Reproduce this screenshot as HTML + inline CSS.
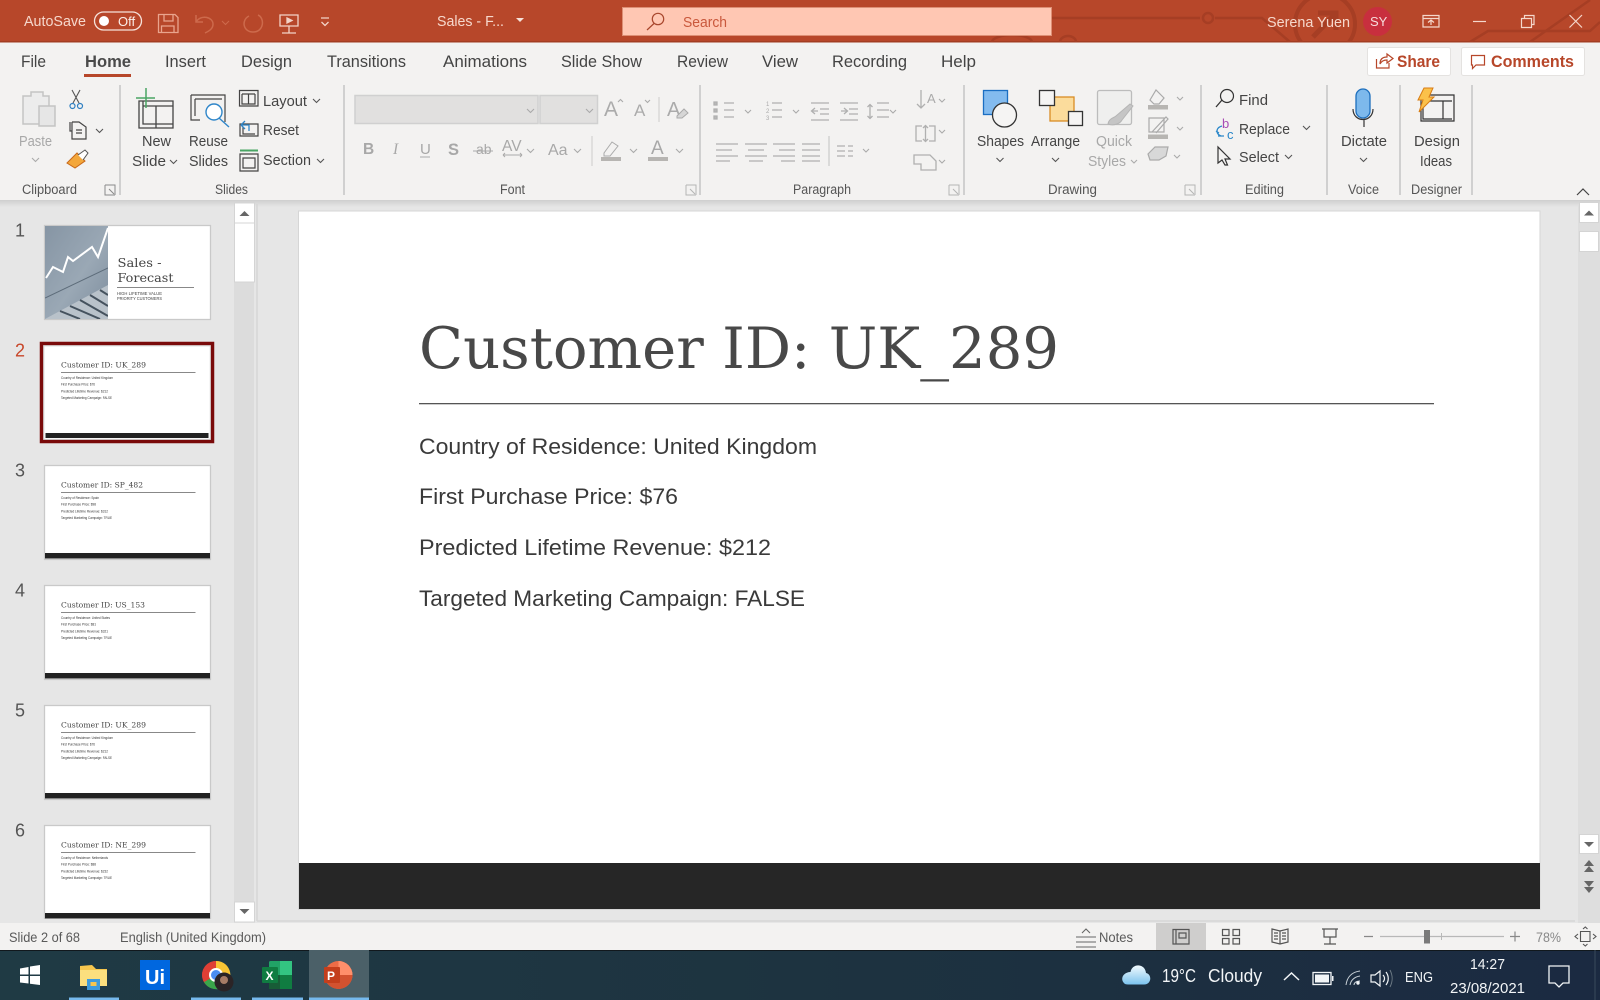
<!DOCTYPE html>
<html lang="en"><head><meta charset="utf-8"><title>Sales - Forecast - PowerPoint</title>
<style>
html,body{margin:0;padding:0;width:1600px;height:1000px;overflow:hidden;background:#e6e6e6}
svg{display:block;position:absolute;left:0;top:0;filter:blur(.35px)}
text{font-family:"Liberation Sans",sans-serif;font-size:15px;fill:#444}
.t{fill:#f6d8cc}
.tab{font-size:16.5px;fill:#444}
.lb{font-size:13.5px;fill:#555}
.b{font-size:15px;fill:#444}
.d{font-size:15px;fill:#a8a8a8}
.ch{fill:none;stroke:#555;stroke-width:1.1}
.cg{fill:none;stroke:#aaa;stroke-width:1.1}
.ser{font-family:"DejaVu Serif",serif;fill:#444}
.sm{font-size:3.4px;fill:#333}
.sn{font-size:18px;fill:#555}
.s{font-size:13.5px;fill:#5a5a5a}
.w{fill:#f2f5f7}
</style></head><body>
<svg width="1600" height="1000" viewBox="0 0 1600 1000" xmlns="http://www.w3.org/2000/svg">
<defs>
<linearGradient id="tb" x1="0" x2="1" y1="0" y2="0"><stop offset="0" stop-color="#1f3a44"/><stop offset=".5" stop-color="#1d3340"/><stop offset="1" stop-color="#1b2a41"/></linearGradient>
<linearGradient id="sh" x1="0" x2="0" y1="0" y2="1"><stop offset="0" stop-color="#cfcfcf"/><stop offset="1" stop-color="#e6e6e6"/></linearGradient>
<linearGradient id="ph" x1="0" x2="1" y1="0" y2="1"><stop offset="0" stop-color="#8695a4"/><stop offset=".55" stop-color="#9aa8b5"/><stop offset="1" stop-color="#7d8d9d"/></linearGradient>
<linearGradient id="cl" x1="0" x2="0" y1="0" y2="1"><stop offset="0" stop-color="#f2fafe"/><stop offset="1" stop-color="#7cc3ee"/></linearGradient>
<clipPath id="th"><rect x="0" y="204" width="232" height="715"/></clipPath>
<clipPath id="pc"><rect x="45" y="226" width="63" height="93"/></clipPath>
</defs>

<!-- title bar -->
<rect width="1600" height="42" fill="#b7472a"/>
<rect y="41" width="1600" height="1.5" fill="#a33d22"/>
<g fill="none" stroke="#a63e24" stroke-width="2.5">
<path d="M1052 18H1200M1215 18H1262L1290 42"/><circle cx="1208" cy="18" r="5"/>
<circle cx="1325" cy="24" r="30" stroke-width="4"/><path d="M1313 37L1336 13M1318 13H1336V30" stroke-width="5"/>
<path d="M1470 42L1488 31H1590L1600 22M1530 42L1590 0"/>
<path d="M1060 42a8 6 0 0 1 16 0M992 42a20 7 0 0 1 40 0"/>
</g>
<text class="t" x="24" y="26" textLength="62" lengthAdjust="spacingAndGlyphs">AutoSave</text>
<rect x="94.5" y="12" width="47" height="18" rx="9" fill="none" stroke="#f6e2da" stroke-width="1.3"/>
<circle cx="104" cy="21" r="5" fill="#fff"/>
<text x="118" y="26" style="font-size:13px;fill:#fbeee9">Off</text>
<g fill="none" stroke="#e9a48d" stroke-width="1.3">
<path d="M158.5 14.5H175L178 17.500V32.500H158.500ZM164 14.500V21H173V14.500M161.500 32.500V26H174V32.500"/>
</g>
<g fill="none" stroke="#cd6a4c" stroke-width="1.5">
<path d="M196 15V22H203M196 22C201 14 213 17 213 24C213 29 209 31 205 33"/>
<path d="M222 21l3.500 3.500 3.500-3.500" stroke-width="1"/>
<path d="M258 15C265 18 264 32 253 32C243 32 241 20 249 16"/>
</g>
<g fill="none" stroke="#f3d3c7" stroke-width="1.3">
<path d="M280 15H298V26H280ZM289 26V33M282 33H296"/><path d="M287 18L292 20.500L287 23Z" fill="#f3d3c7"/>
<path d="M321 18H329M321.500 22L325 25.500L328.500 22"/>
</g>
<text class="t" x="437" y="26" textLength="67" lengthAdjust="spacingAndGlyphs">Sales - F...</text>
<path d="M516 18H524L520 22Z" fill="#f6e2da"/>
<rect x="622.500" y="7.500" width="429" height="28" fill="#ffc7b3" stroke="#dd8f75"/>
<circle cx="658" cy="19" r="5.700" fill="none" stroke="#a8462c" stroke-width="1.200"/><path d="M654 23.500L647 30" stroke="#a8462c" stroke-width="1.200"/>
<text x="683" y="27" textLength="44" lengthAdjust="spacingAndGlyphs" style="fill:#c9583c">Search</text>
<text class="t" x="1267" y="27" textLength="83" lengthAdjust="spacingAndGlyphs">Serena Yuen</text>
<circle cx="1377.500" cy="21.500" r="14.500" fill="#c82f3e"/>
<text x="1370" y="26" style="font-size:13px;fill:#f6dcdc">SY</text>
<g fill="none" stroke="#f5d8cc" stroke-width="1.200">
<path d="M1423 15.500H1439V27H1423ZM1423 18.500H1439M1431 25V20M1428 22.500L1431 20L1434 22.500"/>
<path d="M1473 21.500H1486"/>
<path d="M1521.500 18.500H1531.500V27.500H1521.500ZM1524.500 18.500V15.500H1534V24.500H1531.500"/>
<path d="M1569.500 15L1582 27.500M1582 15L1569.500 27.500"/>
</g>

<!-- ribbon -->
<rect y="42.500" width="1600" height="157.500" fill="#f3f2f1"/>
<rect y="200" width="1600" height="7" fill="url(#sh)"/>
<text class="tab" x="21" y="67" textLength="25" lengthAdjust="spacingAndGlyphs">File</text>
<text class="tab" x="85" y="67" textLength="46" lengthAdjust="spacingAndGlyphs" style="font-weight:700;fill:#4a4a4a">Home</text>
<rect x="84" y="74" width="47" height="3" fill="#b7472a"/>
<text class="tab" x="165" y="67" textLength="41" lengthAdjust="spacingAndGlyphs">Insert</text>
<text class="tab" x="241" y="67" textLength="51" lengthAdjust="spacingAndGlyphs">Design</text>
<text class="tab" x="327" y="67" textLength="79" lengthAdjust="spacingAndGlyphs">Transitions</text>
<text class="tab" x="443" y="67" textLength="84" lengthAdjust="spacingAndGlyphs">Animations</text>
<text class="tab" x="561" y="67" textLength="81" lengthAdjust="spacingAndGlyphs">Slide Show</text>
<text class="tab" x="677" y="67" textLength="51" lengthAdjust="spacingAndGlyphs">Review</text>
<text class="tab" x="762" y="67" textLength="36" lengthAdjust="spacingAndGlyphs">View</text>
<text class="tab" x="832" y="67" textLength="75" lengthAdjust="spacingAndGlyphs">Recording</text>
<text class="tab" x="941" y="67" textLength="35" lengthAdjust="spacingAndGlyphs">Help</text>

<rect x="1367.500" y="47.500" width="83" height="28" rx="2" fill="#fff" stroke="#e4e2e0"/>
<rect x="1461.500" y="47.500" width="123" height="28" rx="2" fill="#fff" stroke="#e4e2e0"/>
<path d="M1376.500 59V68H1389V63M1380 64C1380 59 1383 57 1387 57V54L1393 58.500L1387 63V60C1384 60 1381.500 61 1380 64Z" fill="none" stroke="#b7472a" stroke-width="1.200"/>
<text x="1397" y="67" textLength="43" lengthAdjust="spacingAndGlyphs" style="font-size:17px;font-weight:700;fill:#b7472a">Share</text>
<path d="M1471.500 55.500H1484.500V65H1476L1472.500 68.500V65H1471.500Z" fill="none" stroke="#b7472a" stroke-width="1.200"/>
<text x="1491" y="67" textLength="83" lengthAdjust="spacingAndGlyphs" style="font-size:17px;font-weight:700;fill:#b7472a">Comments</text>

<g stroke="#bebebe" stroke-width="1.300">
<path d="M120 85V195M344 85V195M700 85V195M964 85V195M1201 85V195M1327 85V195M1400 85V195M1472 85V195"/>
</g>
<text class="lb" x="22" y="194" textLength="55" lengthAdjust="spacingAndGlyphs">Clipboard</text>
<text class="lb" x="215" y="194" textLength="33" lengthAdjust="spacingAndGlyphs">Slides</text>
<text class="lb" x="500" y="194" textLength="25" lengthAdjust="spacingAndGlyphs">Font</text>
<text class="lb" x="793" y="194" textLength="58" lengthAdjust="spacingAndGlyphs">Paragraph</text>
<text class="lb" x="1048" y="194" textLength="49" lengthAdjust="spacingAndGlyphs">Drawing</text>
<text class="lb" x="1245" y="194" textLength="39" lengthAdjust="spacingAndGlyphs">Editing</text>
<text class="lb" x="1348" y="194" textLength="31" lengthAdjust="spacingAndGlyphs">Voice</text>
<text class="lb" x="1411" y="194" textLength="51" lengthAdjust="spacingAndGlyphs">Designer</text>
<g fill="none" stroke="#8a8a8a" stroke-width="1">
<path d="M105 185H115V195M105 185V195H115M109 189L114 194"/>
</g>
<g fill="none" stroke="#b5b5b5" stroke-width="1">
<path d="M686 185H696V195M686 185V195H696M690 189L695 194M949 185H959V195M949 185V195H959M953 189L958 194M1185 185H1195V195M1185 185V195H1195M1189 189L1194 194"/>
</g>
<path d="M1577 195L1583 189L1589 195" fill="none" stroke="#444" stroke-width="1.200"/>

<!-- clipboard -->
<g fill="#ececec" stroke="#c4c4c4" stroke-width="1.500">
<path d="M23 96H31V92H43V96H49V124H23Z"/><rect x="39" y="106" width="16" height="20" fill="#e6e6e6"/>
</g>
<text class="d" x="19" y="146" textLength="33" lengthAdjust="spacingAndGlyphs">Paste</text>
<path class="cg" d="M32 158l3.500 3.500 3.500-3.500"/>
<g fill="none" stroke="#555" stroke-width="1.100"><path d="M72 90L79 103M80 90L73 103"/></g>
<circle cx="72.500" cy="106" r="2.500" fill="none" stroke="#2f7fc1" stroke-width="1.200"/><circle cx="80" cy="106" r="2.500" fill="none" stroke="#2f7fc1" stroke-width="1.200"/>
<path d="M70 122V131H72M72 122H79L86 127V139H72V122M76 130H82M76 133H82" fill="none" stroke="#444" stroke-width="1.200"/>
<path class="ch" d="M96 129l3.500 3.500 3.500-3.500"/>
<path d="M67 163L77 153L85 161L75 168Z" fill="#f3a73b" stroke="#c8691a"/>
<path d="M78 155L85 150L88 153L83 160" fill="#fff" stroke="#555"/>

<!-- slides -->
<g fill="none" stroke="#444" stroke-width="1.300"><path d="M139 101H173V128H139ZM143 106H173M156 106V128M143 101V124H173"/></g>
<path d="M146 88V108M136 98H155" stroke="#4aa564" stroke-width="1.500"/>
<text class="b" x="142" y="146" textLength="29" lengthAdjust="spacingAndGlyphs">New</text>
<text class="b" x="132" y="166" textLength="34" lengthAdjust="spacingAndGlyphs">Slide</text>
<path class="ch" d="M170 160l3.500 3.500 3.500-3.500"/>
<g fill="none" stroke="#444" stroke-width="1.200"><path d="M191 95H225V122M191 95V120H200M195 99H222M195 99V116"/></g>
<circle cx="214" cy="112" r="8" fill="#fff" stroke="#2f86c9" stroke-width="1.400"/><path d="M219 118L229 127" stroke="#2f86c9" stroke-width="1.400"/>
<text class="b" x="189" y="146" textLength="39" lengthAdjust="spacingAndGlyphs">Reuse</text>
<text class="b" x="189" y="166" textLength="39" lengthAdjust="spacingAndGlyphs">Slides</text>
<g fill="none" stroke="#444" stroke-width="1.200">
<path d="M239.500 90.500H258V106H239.500ZM242 94H255M248.500 94V104M242 94V104H255V94"/>
<path d="M240 124H258V136H240ZM243 127V134H255"/>
<path d="M240 154H258V171H240ZM243 158H255V168H243Z" /><path d="M240 150.500H258" stroke="#4aa564" stroke-width="2"/>
</g>
<path d="M241 125L245 121M241 125L245 129M241 125H249V131" fill="none" stroke="#2f86c9" stroke-width="1.300"/>
<text class="b" x="263" y="106" textLength="44" lengthAdjust="spacingAndGlyphs">Layout</text>
<text class="b" x="263" y="135" textLength="36" lengthAdjust="spacingAndGlyphs">Reset</text>
<text class="b" x="263" y="165" textLength="48" lengthAdjust="spacingAndGlyphs">Section</text>
<path class="ch" d="M313 99l3.500 3.500 3.500-3.500M317 159l3.500 3.500 3.500-3.500"/>

<!-- font -->
<rect x="355" y="95.500" width="183" height="28" fill="#e1e0df" stroke="#d0d0d0" stroke-width="1.500"/>
<rect x="540" y="95.500" width="57.500" height="28" fill="#e1e0df" stroke="#d0d0d0" stroke-width="1.500"/>
<path class="cg" d="M527 109l3.500 3.500 3.500-3.500M586 109l3.500 3.500 3.500-3.500"/>
<text x="604" y="116" style="font-size:21px;fill:#ababab">A</text>
<path class="cg" d="M618 102l2.500-2.500 2.500 2.500M645 100l2.500 2.500 2.500-2.500"/>
<text x="634" y="116" style="font-size:17px;fill:#ababab">A</text>
<path d="M659 97V122" stroke="#ccc"/>
<text x="667" y="116" style="font-size:20px;fill:#ababab">A</text>
<path d="M677 116L684 109L688 113L682 118H677Z" fill="#d6d6d6" stroke="#aaa"/>
<text x="363" y="154" style="font-size:15.500px;font-weight:700;fill:#a8a8a8">B</text>
<text x="393" y="154" style="font-size:15.500px;font-style:italic;fill:#a8a8a8;font-family:'Liberation Serif',serif">I</text>
<text x="420" y="154" style="font-size:15px;fill:#a8a8a8">U</text><path d="M420 157H430" stroke="#aaa"/>
<text x="448" y="155" style="font-size:16.500px;font-weight:700;fill:#a8a8a8">S</text>
<text x="476" y="154" style="font-size:14px;fill:#a8a8a8">ab</text><path d="M473 151H493" stroke="#aaa"/>
<text x="502" y="151" style="font-size:15.500px;fill:#a8a8a8">AV</text><path d="M503 155H522M503 155l2-2M503 155l2 2M522 155l-2-2M522 155l-2 2" stroke="#aaa" fill="none"/>
<path class="cg" d="M527 149l3.500 3.500 3.500-3.500M574 149l3.500 3.500 3.500-3.500M630 149l3.500 3.500 3.500-3.500M676 149l3.500 3.500 3.500-3.500"/>
<text x="548" y="155" style="font-size:16px;fill:#a8a8a8">Aa</text>
<path d="M592 136V166" stroke="#ccc"/>
<path d="M604 153L612 142L618 146L610 156H604Z" fill="none" stroke="#aaa"/><rect x="601" y="157" width="20" height="4" fill="#b7b5b2"/>
<text x="651" y="154" style="font-size:19px;fill:#a8a8a8">A</text><rect x="648" y="157" width="20" height="4" fill="#b7b5b2"/>

<!-- paragraph -->
<g stroke="#b0b0b0" stroke-width="1.300" fill="none">
<path d="M724 103H734M724 110H734M724 117H734M772 103H782M772 110H782M772 117H782"/>
<path d="M714 102h3v3h-3zM714 109h3v3h-3zM714 116h3v3h-3z" fill="#b8b8b8"/>
<path d="M811 103H829M820 109H829M820 114H829M811 120H829M840 103H858M849 109H858M849 114H858M840 120H858"/>
<path d="M818 111H812M815 108L811.500 111L815 114M841 111H847M844 108L847.500 111L844 114"/>
<path d="M877 103H889M877 110H889M877 117H889M870 105V118M867.500 107L870 104.500L872.500 107M867.500 116L870 118.500L872.500 116"/>
<path d="M716 144H738M716 150H732M716 156H738M716 161H730M745 144H767M748 150H764M745 156H767M749 161H763M773 144H795M779 150H795M773 156H795M781 161H795M802 144H820M802 150H820M802 156H820M802 161H820"/>
<path d="M837 146H845M848 146H853M837 151H845M848 151H853M837 156H845M848 156H853"/>
<path d="M829 136V166" stroke="#ccc"/>
<path d="M921 90V108M917 104L921 108L925 104"/>
<path d="M922 126H916V141H922M929 126H935V141H929M925.500 125V142M923 128L925.500 125.500L928 128M923 139L925.500 141.500L928 139" />
<path d="M914 155H930L936 161V170H921V164H914Z"/>
</g>
<text x="766" y="106" style="font-size:6px;fill:#aaa">1</text>
<text x="766" y="113" style="font-size:6px;fill:#aaa">2</text>
<text x="766" y="120" style="font-size:6px;fill:#aaa">3</text>
<text x="927" y="103" style="font-size:13px;fill:#aaa">A</text>
<path class="cg" d="M745 110l3 3 3-3M793 110l3 3 3-3M890 110l3 3 3-3M939 99l3 3 3-3M939 130l3 3 3-3M939 160l3 3 3-3M863 149l3 3 3-3"/>

<!-- drawing -->
<rect x="983.500" y="90.500" width="24" height="24" fill="#83bbef" stroke="#1b6ec2" stroke-width="1.300"/>
<circle cx="1004.500" cy="115" r="12" fill="#f5f4f3" stroke="#333" stroke-width="1.300"/>
<text class="b" x="977" y="146" textLength="47" lengthAdjust="spacingAndGlyphs">Shapes</text>
<path class="ch" d="M996.500 158l3.500 3.500 3.500-3.500"/>
<rect x="1050" y="97" width="24" height="24" fill="#fbdc9c" stroke="#d98c25" stroke-width="1.300"/>
<rect x="1039.500" y="90.500" width="15" height="15" fill="#f5f4f3" stroke="#333" stroke-width="1.300"/>
<rect x="1068.500" y="111.500" width="14" height="14" fill="#f5f4f3" stroke="#333" stroke-width="1.300"/>
<text class="b" x="1031" y="146" textLength="49" lengthAdjust="spacingAndGlyphs">Arrange</text>
<path class="ch" d="M1052 158l3.500 3.500 3.500-3.500"/>
<rect x="1097.500" y="90.500" width="34" height="34" rx="2" fill="#efefee" stroke="#bcbcbc" stroke-width="1.300"/>
<path d="M1108 124C1109 118 1114 118 1116 116L1130 104L1133 106L1122 120C1120 124 1113 126 1108 124Z" fill="#c5c5c5" stroke="#b5b5b5"/>
<text class="d" x="1096" y="146" textLength="36" lengthAdjust="spacingAndGlyphs">Quick</text>
<text class="d" x="1088" y="166" textLength="38" lengthAdjust="spacingAndGlyphs">Styles</text>
<path class="cg" d="M1131 160l3 3 3-3M1177 97l3 3 3-3M1177 127l3 3 3-3M1174 155l3 3 3-3"/>
<g fill="none" stroke="#aaa" stroke-width="1.200">
<path d="M1150 100L1156 90L1164 98L1159 104H1154Z"/>
<path d="M1149 118H1164V132H1149ZM1152 132L1166 117L1168 119L1156 133"/>
<path d="M1148 154L1155 147H1168L1166 156L1159 160H1150Z" fill="#d8d8d8"/>
</g>
<rect x="1148" y="105" width="20" height="4.500" fill="#b7b5b2"/>
<rect x="1148" y="134.500" width="20" height="4.500" fill="#b7b5b2"/>

<!-- editing -->
<circle cx="1227" cy="96" r="6.500" fill="none" stroke="#333" stroke-width="1.200"/><path d="M1222 100L1216 107" stroke="#333" stroke-width="1.300"/>
<text class="b" x="1239" y="105" textLength="29" lengthAdjust="spacingAndGlyphs">Find</text>
<text x="1222" y="128" style="font-size:13px;fill:#a84cb5">b</text>
<text x="1227" y="139" style="font-size:13px;fill:#2a87c9">c</text>
<path d="M1222 126C1215 128 1216 134 1221 136M1216 131l3 2M1218 136H1224" fill="none" stroke="#2a87c9" stroke-width="1.300"/>
<text class="b" x="1239" y="134" textLength="51" lengthAdjust="spacingAndGlyphs">Replace</text>
<path class="ch" d="M1303 126l3.500 3.500 3.500-3.500"/>
<path d="M1218 147V163L1222 160L1225 165H1227.500L1225 159H1230Z" fill="#f3f2f1" stroke="#333" stroke-width="1.200"/>
<text class="b" x="1239" y="162" textLength="40" lengthAdjust="spacingAndGlyphs">Select</text>
<path class="ch" d="M1285 155l3.500 3.500 3.500-3.500"/>

<!-- voice / designer -->
<rect x="1356" y="89" width="14" height="29" rx="7" fill="#7db9ec" stroke="#1d6fbd" stroke-width="1.300"/>
<path d="M1353 109C1353 123 1373 123 1373 109M1364 120V127" fill="none" stroke="#333" stroke-width="1.200"/>
<text class="b" x="1341" y="146" textLength="46" lengthAdjust="spacingAndGlyphs">Dictate</text>
<path class="ch" d="M1360 158l3.500 3.500 3.500-3.500"/>
<g fill="none" stroke="#333" stroke-width="1.200"><path d="M1421 95H1454V121H1421ZM1423 101H1452M1443 101V119M1423 101V119H1452"/></g>
<path d="M1424 88H1433L1429 97H1434L1419 112L1423 100H1418Z" fill="#fbc14a" stroke="#d87c13"/>
<text class="b" x="1414" y="146" textLength="46" lengthAdjust="spacingAndGlyphs">Design</text>
<text class="b" x="1420" y="166" textLength="32" lengthAdjust="spacingAndGlyphs">Ideas</text>

<!-- thumbnail panel -->
<rect x="234" y="204" width="20" height="718" fill="#dcdcdc"/>
<rect x="234.500" y="203" width="20" height="20" fill="#fff" stroke="#d4d4d4"/>
<path d="M239.500 216L244.500 211L249.500 216Z" fill="#666"/>
<rect x="234.500" y="223" width="20" height="59" fill="#fff" stroke="#d4d4d4"/>
<rect x="234.500" y="902" width="20" height="20" fill="#fff" stroke="#d4d4d4"/>
<path d="M239.500 909L244.500 914L249.500 909Z" fill="#666"/>
<path d="M257 204V921M257 921H1575" stroke="#d6d6d6" stroke-width="1.500" fill="none"/>

<g clip-path="url(#th)">
<!-- thumb1 -->
<rect x="44.500" y="225.500" width="166" height="94" fill="#fff" stroke="#c9c9c9" stroke-width="1.300"/>
<g clip-path="url(#pc)">
<rect x="45" y="226" width="63" height="93" fill="url(#ph)"/>
<path d="M45 298L108 268" stroke="#5d6c7a" stroke-width="1"/>
<path d="M45 319L108 285V319Z" fill="#b9c2ca"/>
<path d="M60 311L80 319M70 306L100 319M80 300L108 316M90 295L108 306M100 290L108 295" stroke="#45525e" stroke-width="2"/>
</g>
<path d="M46 278L53 267L63 272L68 257L73 261L92 247L98 257L108 228" fill="none" stroke="#fff" stroke-width="2"/>
<text class="ser" x="117.500" y="267" textLength="44" lengthAdjust="spacingAndGlyphs" style="font-size:12.500px">Sales -</text>
<text class="ser" x="117.500" y="282" textLength="56" lengthAdjust="spacingAndGlyphs" style="font-size:12.500px">Forecast</text>
<path d="M117 287.500H194" stroke="#888"/>
<text x="117" y="295" textLength="45" lengthAdjust="spacingAndGlyphs" style="font-size:4.500px;fill:#444">HIGH LIFETIME VALUE</text>
<text x="117" y="300" textLength="45" lengthAdjust="spacingAndGlyphs" style="font-size:4.500px;fill:#444">PRIORITY CUSTOMERS</text>
<!-- thumb2 -->
<rect x="41.500" y="343.500" width="171" height="98" fill="#fff" stroke="#7a0a0a" stroke-width="3.500"/>
<rect x="43.800" y="345.800" width="166.500" height="93.500" fill="none" stroke="#cfcfcf" stroke-width="1"/>
<rect x="45.500" y="433" width="163" height="5" fill="#222"/>
<text class="ser" x="61" y="367.500" textLength="85" lengthAdjust="spacingAndGlyphs" style="font-size:7.800px">Customer ID: UK_289</text>
<path d="M61 372.500H195.500" stroke="#888"/>
<text class="sm" x="61" y="379" textLength="52" lengthAdjust="spacingAndGlyphs">Country of Residence: United Kingdom</text>
<text class="sm" x="61" y="385.500" textLength="34" lengthAdjust="spacingAndGlyphs">First Purchase Price: $76</text>
<text class="sm" x="61" y="392.500" textLength="47" lengthAdjust="spacingAndGlyphs">Predicted Lifetime Revenue: $212</text>
<text class="sm" x="61" y="399" textLength="51" lengthAdjust="spacingAndGlyphs">Targeted Marketing Campaign: FALSE</text>
<!-- thumb3 -->
<rect x="44.500" y="465.500" width="166" height="94" fill="#fff" stroke="#c9c9c9" stroke-width="1.300"/>
<rect x="45" y="553" width="165" height="5.500" fill="#222"/>
<text class="ser" x="61" y="487.500" textLength="82" lengthAdjust="spacingAndGlyphs" style="font-size:7.800px">Customer ID: SP_482</text>
<path d="M61 492.500H195.500" stroke="#888"/>
<text class="sm" x="61" y="499" textLength="38" lengthAdjust="spacingAndGlyphs">Country of Residence: Spain</text>
<text class="sm" x="61" y="505.500" textLength="35" lengthAdjust="spacingAndGlyphs">First Purchase Price: $98</text>
<text class="sm" x="61" y="512.500" textLength="47" lengthAdjust="spacingAndGlyphs">Predicted Lifetime Revenue: $312</text>
<text class="sm" x="61" y="519" textLength="51" lengthAdjust="spacingAndGlyphs">Targeted Marketing Campaign: TRUE</text>
<!-- thumb4 -->
<rect x="44.500" y="585.500" width="166" height="94" fill="#fff" stroke="#c9c9c9" stroke-width="1.300"/>
<rect x="45" y="673" width="165" height="5.500" fill="#222"/>
<text class="ser" x="61" y="607.500" textLength="84" lengthAdjust="spacingAndGlyphs" style="font-size:7.800px">Customer ID: US_153</text>
<path d="M61 612.500H195.500" stroke="#888"/>
<text class="sm" x="61" y="619" textLength="49" lengthAdjust="spacingAndGlyphs">Country of Residence: United States</text>
<text class="sm" x="61" y="625.500" textLength="35" lengthAdjust="spacingAndGlyphs">First Purchase Price: $81</text>
<text class="sm" x="61" y="632.500" textLength="47" lengthAdjust="spacingAndGlyphs">Predicted Lifetime Revenue: $321</text>
<text class="sm" x="61" y="639" textLength="51" lengthAdjust="spacingAndGlyphs">Targeted Marketing Campaign: TRUE</text>
<!-- thumb5 -->
<rect x="44.500" y="705.500" width="166" height="94" fill="#fff" stroke="#c9c9c9" stroke-width="1.300"/>
<rect x="45" y="793" width="165" height="5.500" fill="#222"/>
<text class="ser" x="61" y="727.500" textLength="85" lengthAdjust="spacingAndGlyphs" style="font-size:7.800px">Customer ID: UK_289</text>
<path d="M61 732.500H195.500" stroke="#888"/>
<text class="sm" x="61" y="739" textLength="52" lengthAdjust="spacingAndGlyphs">Country of Residence: United Kingdom</text>
<text class="sm" x="61" y="745.500" textLength="34" lengthAdjust="spacingAndGlyphs">First Purchase Price: $76</text>
<text class="sm" x="61" y="752.500" textLength="47" lengthAdjust="spacingAndGlyphs">Predicted Lifetime Revenue: $212</text>
<text class="sm" x="61" y="759" textLength="51" lengthAdjust="spacingAndGlyphs">Targeted Marketing Campaign: FALSE</text>
<!-- thumb6 -->
<rect x="44.500" y="825.500" width="166" height="94" fill="#fff" stroke="#c9c9c9" stroke-width="1.300"/>
<rect x="45" y="913" width="165" height="5.500" fill="#222"/>
<text class="ser" x="61" y="847.500" textLength="85" lengthAdjust="spacingAndGlyphs" style="font-size:7.800px">Customer ID: NE_299</text>
<path d="M61 852.500H195.500" stroke="#888"/>
<text class="sm" x="61" y="859" textLength="47" lengthAdjust="spacingAndGlyphs">Country of Residence: Netherlands</text>
<text class="sm" x="61" y="865.500" textLength="35" lengthAdjust="spacingAndGlyphs">First Purchase Price: $88</text>
<text class="sm" x="61" y="872.500" textLength="47" lengthAdjust="spacingAndGlyphs">Predicted Lifetime Revenue: $232</text>
<text class="sm" x="61" y="879" textLength="51" lengthAdjust="spacingAndGlyphs">Targeted Marketing Campaign: TRUE</text>
</g>
<text class="sn" x="15" y="236.500">1</text>
<text class="sn" x="15" y="356.500" style="fill:#c8472a">2</text>
<text class="sn" x="15" y="476.500">3</text>
<text class="sn" x="15" y="596.500">4</text>
<text class="sn" x="15" y="716.500">5</text>
<text class="sn" x="15" y="836.500">6</text>

<!-- slide -->
<rect x="298.500" y="211" width="1241.500" height="698.500" fill="#fff" stroke="#d6d6d6"/>
<rect x="299" y="863" width="1241" height="46" fill="#262626"/>
<text class="ser" x="419" y="368" textLength="640" lengthAdjust="spacingAndGlyphs" style="font-size:57.500px;fill:#484848">Customer ID: UK_289</text>
<rect x="419" y="403" width="1015" height="1.300" fill="#555"/>
<text x="419" y="454" textLength="398" lengthAdjust="spacingAndGlyphs" style="font-size:22.500px;fill:#3a3a3a">Country of Residence: United Kingdom</text>
<text x="419" y="504" textLength="259" lengthAdjust="spacingAndGlyphs" style="font-size:22.500px;fill:#3a3a3a">First Purchase Price: $76</text>
<text x="419" y="555" textLength="352" lengthAdjust="spacingAndGlyphs" style="font-size:22.500px;fill:#3a3a3a">Predicted Lifetime Revenue: $212</text>
<text x="419" y="606" textLength="386" lengthAdjust="spacingAndGlyphs" style="font-size:22.500px;fill:#3a3a3a">Targeted Marketing Campaign: FALSE</text>

<!-- right scrollbar -->
<rect x="1578" y="204" width="22" height="719" fill="#dedede"/>
<rect x="1579.500" y="202.500" width="19" height="20" fill="#fff" stroke="#d4d4d4"/>
<path d="M1584 215.500L1589 210.500L1594 215.500Z" fill="#666"/>
<rect x="1579.500" y="231.500" width="19" height="20" fill="#fff" stroke="#d4d4d4"/>
<rect x="1579.500" y="834.500" width="19" height="19" fill="#fff" stroke="#d4d4d4"/>
<path d="M1584 842L1589 847L1594 842Z" fill="#666"/>
<path d="M1584 866L1589 860L1594 866ZM1584 872L1589 866L1594 872ZM1584 881L1589 887L1594 881ZM1584 887L1589 893L1594 887Z" fill="#666"/>

<!-- status bar -->
<rect y="923" width="1600" height="27" fill="#f3f2f1"/>
<text class="s" x="9" y="942" textLength="71" lengthAdjust="spacingAndGlyphs">Slide 2 of 68</text>
<text class="s" x="120" y="942" textLength="146" lengthAdjust="spacingAndGlyphs">English (United Kingdom)</text>
<path d="M1076 937H1096M1076 942H1096M1076 947H1096M1082 933L1086 929L1090 933" fill="none" stroke="#666" stroke-width="1.100"/>
<text class="s" x="1099" y="942" textLength="34" lengthAdjust="spacingAndGlyphs">Notes</text>
<rect x="1156" y="923" width="50" height="27" fill="#cfcecd"/>
<g fill="none" stroke="#555" stroke-width="1.200">
<path d="M1173 929.500H1189V944H1173ZM1176 929.500V944M1179 933H1186V938H1179Z"/>
<path d="M1222.500 929.500H1229V935.500H1222.500ZM1233 929.500H1239.500V935.500H1233ZM1222.500 938.500H1229V944H1222.500ZM1233 938.500H1239.500V944H1233Z"/>
<path d="M1272 929L1280 931L1288 929V942L1280 944L1272 942ZM1280 931V944M1274 933H1278M1274 936H1278M1274 939H1278M1282 933H1286M1282 936H1286M1282 939H1286"/>
<path d="M1322 929H1338M1324 929V937H1336V929M1330 937V944M1324 944H1336"/>
<path d="M1364 936.500H1373M1510 936.500H1520M1515 931.500V941.500" stroke="#888"/>
</g>
<path d="M1380 936.500H1504" stroke="#b8b8b8" stroke-width="1.200"/>
<path d="M1441.500 933V940" stroke="#b8b8b8"/>
<rect x="1424" y="930" width="6" height="13.500" fill="#7a7a7a"/>
<text class="s" x="1536" y="942" textLength="25" lengthAdjust="spacingAndGlyphs" style="fill:#888">78%</text>
<g fill="none" stroke="#555" stroke-width="1.100"><path d="M1580.500 931.500H1590V941.500H1580.500ZM1578 934L1575 936.500L1578 939M1593 934L1596 936.500L1593 939M1583 944L1585.300 946L1587.500 944M1583 929L1585.300 927L1587.500 929"/></g>

<!-- taskbar -->
<rect y="950" width="1600" height="50" fill="url(#tb)"/>
<rect y="950" width="1600" height="1" fill="#11181d"/>
<path d="M20 968.500L28.500 967V974.500H20ZM30 966.500L40 965V974.500H30ZM20 976H28.500V983.500L20 982.500ZM30 976H40V985L30 983.700Z" fill="#fff"/>
<path d="M80 966L92 965L96 969H107V986H80Z" fill="#f6c64e"/>
<path d="M80 970H107V986H80Z" fill="#fbdf7e"/>
<path d="M87 979H100V990H87Z" fill="#3d9bdc"/><rect x="90.500" y="982" width="6" height="4" fill="#f6c64e"/>
<rect x="140" y="960" width="30" height="30" fill="#0067df"/>
<text x="145" y="984" style="font-size:20px;font-weight:700;fill:#fff">Ui</text>
<circle cx="216" cy="975" r="14" fill="#e0403a"/>
<path d="M216 975L204 982A14 14 0 0 0 222 988Z" fill="#3aa54a"/><path d="M216 961A14 14 0 0 1 229 981L216 975Z" fill="#f8c434"/>
<path d="M216 961A14 14 0 0 0 204 982L216 975Z" fill="#df3f35"/>
<circle cx="216" cy="975" r="6" fill="#4a8df0" stroke="#fff" stroke-width="2"/>
<circle cx="224" cy="982" r="9.500" fill="#2b2426"/><circle cx="224" cy="980" r="4" fill="#a87c66"/>
<rect x="269" y="961" width="23" height="28" rx="1.500" fill="#21a366"/>
<rect x="280" y="961" width="12" height="14" fill="#33c481"/><rect x="269" y="975" width="11" height="14" fill="#185c37"/><rect x="280" y="975" width="12" height="14" fill="#107c41"/>
<rect x="262" y="967" width="16" height="16" rx="1" fill="#107c41"/>
<text x="265.500" y="980" style="font-size:12px;font-weight:700;fill:#fff">X</text>
<rect x="309" y="950" width="60" height="50" fill="#4b6068"/>
<circle cx="338.500" cy="975" r="14" fill="#ed6c47"/>
<path d="M338.500 975V961A14 14 0 0 1 352.500 975Z" fill="#ff8f6b"/><path d="M338.500 975H352.500A14 14 0 0 1 324.500 975Z" fill="#d35230"/>
<rect x="324" y="967" width="16" height="16" rx="1" fill="#c43e1c"/>
<text x="327" y="980" style="font-size:12px;font-weight:700;fill:#fff">P</text>
<rect x="69" y="997.500" width="50" height="2.500" fill="#76b9ed"/>
<rect x="191" y="997.500" width="50" height="2.500" fill="#76b9ed"/>
<rect x="252" y="997.500" width="51" height="2.500" fill="#76b9ed"/>
<rect x="309" y="997.500" width="60" height="2.500" fill="#76b9ed"/>
<path d="M1128 984.500H1144C1152 984.500 1152 974 1146 973C1145 963 1132 963 1130.500 972C1124 972 1120 978 1123.500 982.500C1124.500 984 1126 984.500 1128 984.500Z" fill="url(#cl)"/>
<text class="w" x="1162" y="982" textLength="34" lengthAdjust="spacingAndGlyphs" style="font-size:18px">19°C</text>
<text class="w" x="1208" y="982" textLength="54" lengthAdjust="spacingAndGlyphs" style="font-size:18px">Cloudy</text>
<path d="M1284 980L1291.500 973L1299 980" fill="none" stroke="#f2f5f7" stroke-width="1.500"/>
<rect x="1313" y="972.500" width="18" height="12" fill="none" stroke="#f2f5f7" stroke-width="1.300"/><rect x="1315" y="974.500" width="14" height="8" fill="#f2f5f7"/><rect x="1332" y="976" width="1.500" height="5" fill="#f2f5f7"/>
<path d="M1346 985C1347 977 1352 972 1360 971M1350 985C1351 980 1354 977 1360 976M1354 985C1354 983 1356 981 1360 981" fill="none" stroke="#c8d0d6" stroke-width="1"/><circle cx="1358" cy="983" r="1.700" fill="#f2f5f7"/>
<path d="M1371 975H1375L1380 971V986L1375 982H1371ZM1383 975C1385 977 1385 980 1383 982M1386 972C1389 976 1389 981 1386 985" fill="none" stroke="#f2f5f7" stroke-width="1.200"/>
<path d="M1390 970C1393 976 1393 981 1390 987" fill="none" stroke="#6d7a85" stroke-width="1"/>
<text class="w" x="1405" y="982" textLength="28" lengthAdjust="spacingAndGlyphs" style="font-size:14.500px">ENG</text>
<text class="w" x="1470" y="969" textLength="35" lengthAdjust="spacingAndGlyphs" style="font-size:14.500px">14:27</text>
<text class="w" x="1450" y="993" textLength="75" lengthAdjust="spacingAndGlyphs" style="font-size:14.500px">23/08/2021</text>
<path d="M1549 966H1569V983H1563L1559 987L1555 983H1549Z" fill="none" stroke="#f2f5f7" stroke-width="1.300"/>
<path d="M1595 950V1000" stroke="#3a4a5a"/>
</svg>
</body></html>
